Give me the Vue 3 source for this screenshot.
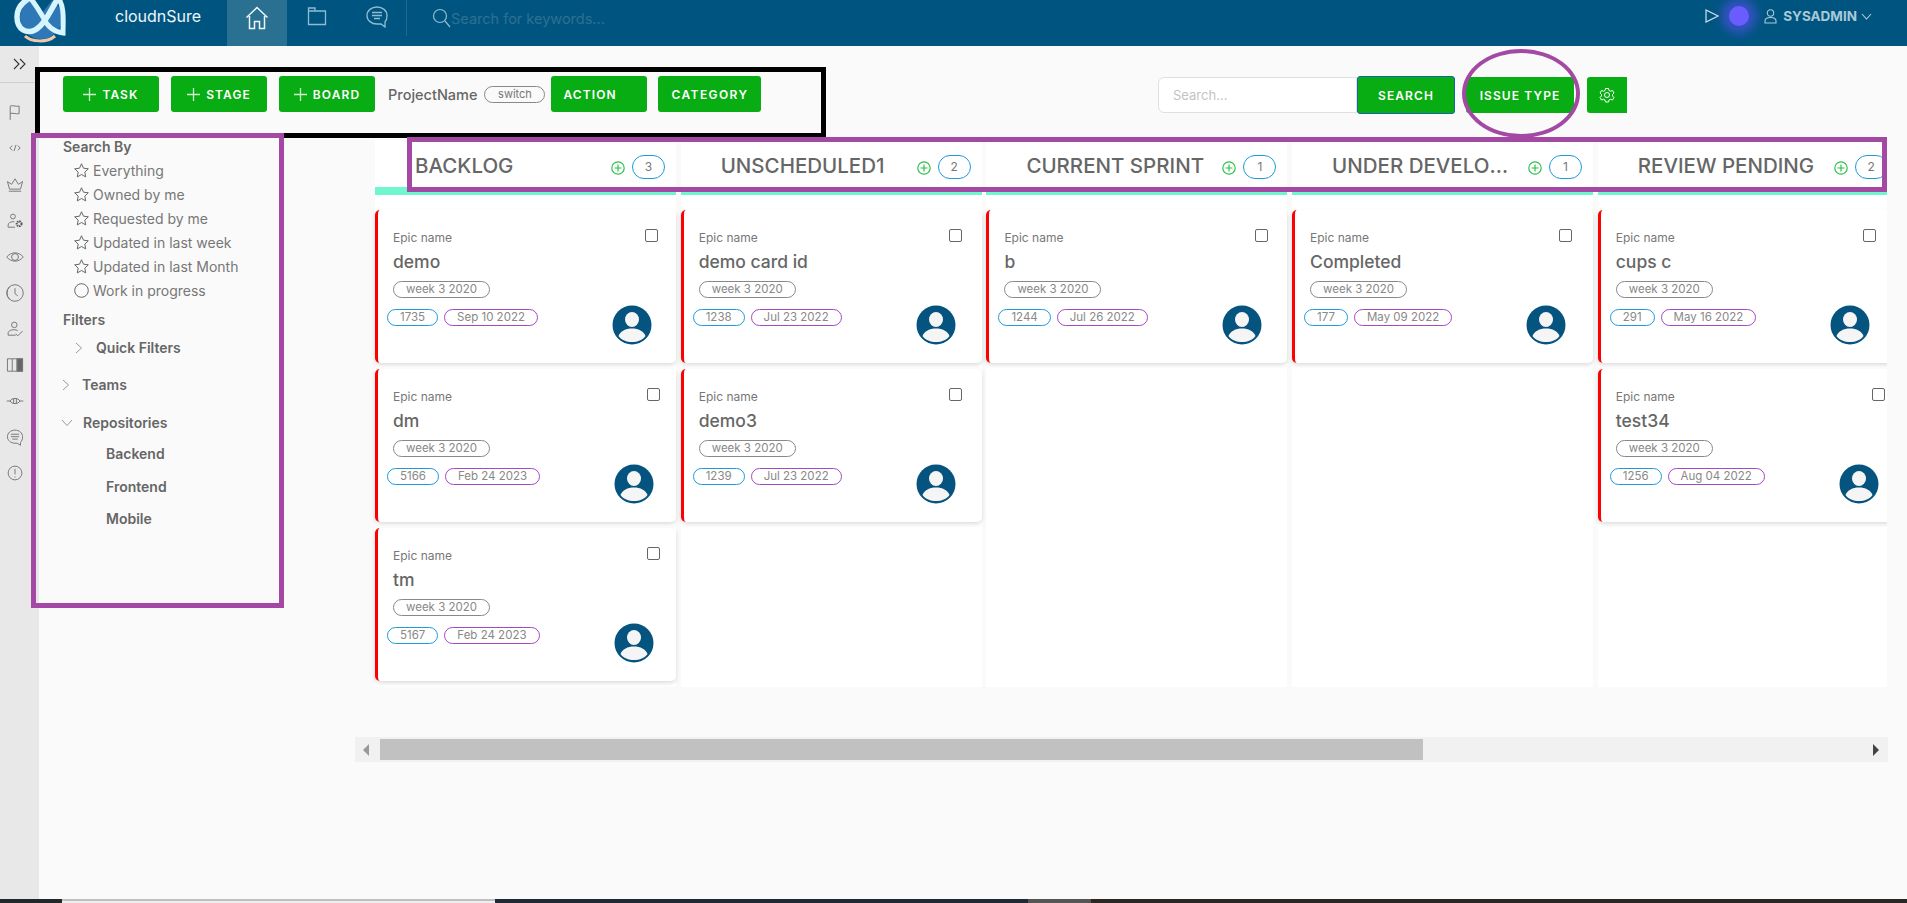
<script setup>
const sideIcons = [
  { d: 'M9 26V6c3-2 7 1 13 0v11c-5 1-10-2-13 0' },
  { d: 'M12 11l-3.500 3.500 3.500 3.500M20 11l3.500 3.500-3.500 3.500M17.500 10l-3 9', small: true },
  { d: 'M7 25h18M8 22h16l3-11-6 4-5-8-5 8-6-4z' },
  { d: 'M13 13a3.500 3.500 0 1 0 0-7 3.500 3.500 0 0 0 0 7zM6 25v-3c0-3 3-5 7-5h2M6 25h10', gear: true },
  { d: 'M4 16c6-8 18-8 24 0-6 8-18 8-24 0zM16 21a5 5 0 1 0 0-10 5 5 0 0 0 0 10z' },
  { d: 'M16 4a12 12 0 1 0 0 24 12 12 0 0 0 0-24zM8 7a13 13 0 0 0 0 18M16 9v8l4 3' },
  { d: 'M15 14a4 4 0 1 0 0-8 4 4 0 0 0 0 8zM6 25v-3c0-3 4-5 9-5 2 0 3 .5 5 1.500M6 25h11M17 23l3 3 7-7' },
  { d: 'M5 7h22v18H5zM12 7v18M19 7v18', fill: true },
  { d: 'M4 16h5M23 16h5M9 16c2-5 12-5 14 0-2 5-12 5-14 0zM14 12v8M18 12v8', small: true },
  { d: 'M16 6c-6 0-11 4-11 9.500S10 25 16 25h3l5 3v-4c2-2 3-5 3-8.500C27 10 22 6 16 6zM10 12h12M10 15.500h12M12 19h8' },
  { d: 'M16 6a10 10 0 1 0 0 20 10 10 0 0 0 0-20zM16 10v8M16 21v1.500' }
]

const searchBy = [
  { label: 'Everything' },
  { label: 'Owned by me' },
  { label: 'Requested by me' },
  { label: 'Updated in last week' },
  { label: 'Updated in last Month' },
  { label: 'Work in progress', circle: true }
]

const columns = [
  { title: 'BACKLOG', count: 3, cards: [
    { name: 'demo', id: '1735', date: 'Sep 10 2022' },
    { name: 'dm', id: '5166', date: 'Feb 24 2023' },
    { name: 'tm', id: '5167', date: 'Feb 24 2023' }
  ] },
  { title: 'UNSCHEDULED1', count: 2, cards: [
    { name: 'demo card id', id: '1238', date: 'Jul 23 2022' },
    { name: 'demo3', id: '1239', date: 'Jul 23 2022' }
  ] },
  { title: 'CURRENT SPRINT', count: 1, cards: [
    { name: 'b', id: '1244', date: 'Jul 26 2022' }
  ] },
  { title: 'UNDER DEVELOPMENT', count: 1, cards: [
    { name: 'Completed', id: '177', date: 'May 09 2022' }
  ] },
  { title: 'REVIEW PENDING', count: 2, cards: [
    { name: 'cups c', id: '291', date: 'May 16 2022' },
    { name: 'test34', id: '1256', date: 'Aug 04 2022' }
  ] }
]
</script>

<template>
  <div class="page">
    <header class="topbar">
      <div class="logo">
        <svg width="54" height="46" viewBox="0 0 54 46">
          <path d="M12 36c6 6 22 7 30 0" fill="none" stroke="#f2c9a6" stroke-width="3"/>
          <ellipse cx="28" cy="18" rx="21" ry="21" fill="#2f78b8"/>
          <path d="M17 -2L29 13 41 -2z" fill="#005580"/>
          <path d="M34 -6C20 -6 4 2 4 17c0 13 10 17 18 13 8-4 14-16 24-34" fill="none" stroke="#d6f5fc" stroke-width="5.500"/>
          <path d="M16 -4c6 8 10 14 14 21 4 9 10 15 20 16 0-13 2-27-6-37" fill="none" stroke="#d6f5fc" stroke-width="5"/>
        </svg>
      </div>
      <span class="brand">cloudnSure</span>
      <nav class="nav">
        <a class="nav-item active">
          <svg width="24" height="24" viewBox="0 0 24 24" fill="none" stroke="#eef6fa" stroke-width="1.500"><path d="M1.500 11.500L12 1.500l10.500 10M4.500 10v12.500h5v-7h5v7h5V10"/></svg>
        </a>
        <a class="nav-item">
          <svg width="20" height="20" viewBox="0 0 20 20" fill="none" stroke="#8fbcd0" stroke-width="1.300"><path d="M1.500 2h6.500v3h10.500v13.500h-17zM1.500 5h6.500"/></svg>
        </a>
        <a class="nav-item">
          <svg width="22" height="22" viewBox="0 0 22 22" fill="none" stroke="#8fbcd0" stroke-width="1.300"><path d="M11 1C5.500 1 1 4.500 1 9.500S5.500 18 11 18h4l4 3v-5c1.500-1.500 2-4 2-6.500C21 4.500 16.500 1 11 1zM6 6.500h10M6 9.500h10M8 12.500h6"/></svg>
        </a>
      </nav>
      <div class="top-search">
        <svg width="19" height="20" viewBox="0 0 19 20" fill="none" stroke="#8fbcd0" stroke-width="1.200"><circle cx="8" cy="8" r="6.500"/><path d="M13 13l5 6"/></svg>
        <span>Search for keywords...</span>
      </div>
      <div class="top-right">
        <svg width="14" height="14" viewBox="0 0 14 14" fill="none" stroke="#cfe2ea" stroke-width="1.200"><path d="M1 1l12 6L1 13z"/></svg>
        <span class="glow"></span>
        <svg width="13" height="15" viewBox="0 0 13 15" fill="none" stroke="#a9c9d8" stroke-width="1.100"><circle cx="6.500" cy="4" r="3.200"/><path d="M1 14v-2c0-2.500 2.500-3.500 5.500-3.500s5.500 1 5.500 3.500v2z"/></svg>
        <span class="user">SYSADMIN</span>
        <svg width="11" height="7" viewBox="0 0 11 7" fill="none" stroke="#b5d0dd" stroke-width="1.100"><path d="M1 1l4.500 5L10 1"/></svg>
      </div>
    </header>

    <div class="body">
      <aside class="rail">
        <div class="rail-top">
          <svg width="13" height="12" viewBox="0 0 13 12" fill="none" stroke="#333" stroke-width="1.100"><path d="M1 1l5 5-5 5M7 1l5 5-5 5"/></svg>
        </div>
        <div class="rail-icons">
          <svg v-for="(icon, i) in sideIcons" :key="i" width="22" height="22" viewBox="0 0 32 32" fill="none" stroke="#777" stroke-width="1.400">
            <path :d="icon.d"/>
            <rect v-if="icon.fill" x="19" y="7" width="8" height="18" fill="#666"/>
            <circle v-if="icon.gear" cx="22" cy="20" r="3.500" stroke="#555" stroke-width="3" stroke-dasharray="2 1"/>
          </svg>
        </div>
      </aside>

      <main class="main">
        <div class="toolbar">
          <div class="tools">
            <button class="btn"><svg class="plus" width="13" height="13" viewBox="0 0 13 13" stroke="#cdf3cf" stroke-width="1.300"><path d="M6.500 0v13M0 6.500h13"/></svg>TASK</button>
            <button class="btn"><svg class="plus" width="13" height="13" viewBox="0 0 13 13" stroke="#cdf3cf" stroke-width="1.300"><path d="M6.500 0v13M0 6.500h13"/></svg>STAGE</button>
            <button class="btn"><svg class="plus" width="13" height="13" viewBox="0 0 13 13" stroke="#cdf3cf" stroke-width="1.300"><path d="M6.500 0v13M0 6.500h13"/></svg>BOARD</button>
            <span class="project">ProjectName</span>
            <span class="switch">switch</span>
            <button class="btn left">ACTION</button>
            <button class="btn wide">CATEGORY</button>
          </div>
          <div class="tools-right">
            <div class="search-input">Search...</div>
            <button class="btn search">SEARCH</button>
            <button class="btn issue">ISSUE TYPE</button>
            <button class="btn gear">
              <svg width="16" height="16" viewBox="0 0 32 32" fill="none" stroke="#fff" stroke-width="2"><circle cx="16" cy="16" r="5"/><path d="M13 3h6l1 4 3 1.500 4-1.500 3 5-3 3v3l3 3-3 5-4-1.500-3 1.500-1 4h-6l-1-4-3-1.500-4 1.500-3-5 3-3v-3l-3-3 3-5 4 1.500 3-1.500z"/></svg>
            </button>
          </div>
        </div>

        <div class="content">
          <section class="panel">
            <h4 class="panel-head">Search By</h4>
            <ul class="search-list">
              <li v-for="item in searchBy" :key="item.label">
                <svg width="15" height="15" viewBox="0 0 15 15" fill="none" stroke="#666" stroke-width="1">
                  <circle v-if="item.circle" cx="7.500" cy="7.500" r="6.800"/>
                  <path v-else d="M7.500 .8l2 4.400 4.800.6-3.500 3.300.9 4.800-4.200-2.400-4.200 2.400.9-4.800L.7 5.800l4.800-.6z"/>
                </svg>
                {{ item.label }}
              </li>
            </ul>
            <h4 class="filters">Filters</h4>
            <div class="tree tree-quick">
              <svg width="8" height="12" viewBox="0 0 8 12" fill="none" stroke="#999" stroke-width="1"><path d="M1 1l5.500 5L1 11"/></svg>
              <span>Quick Filters</span>
            </div>
            <div class="tree tree-teams">
              <svg width="8" height="12" viewBox="0 0 8 12" fill="none" stroke="#999" stroke-width="1"><path d="M1 1l5.500 5L1 11"/></svg>
              <span>Teams</span>
            </div>
            <div class="tree tree-repos">
              <svg width="12" height="8" viewBox="0 0 12 8" fill="none" stroke="#999" stroke-width="1"><path d="M1 1l5 5.500L11 1"/></svg>
              <span>Repositories</span>
            </div>
            <ul class="repos">
              <li>Backend</li>
              <li>Frontend</li>
              <li>Mobile</li>
            </ul>
          </section>

          <section class="board-wrap">
            <div class="board">
              <div v-for="col in columns" :key="col.title" class="col">
                <div class="col-head">
                  <span class="col-title">{{ col.title }}</span>
                  <svg class="col-add" width="14" height="14" viewBox="0 0 14 14" fill="none" stroke="#2ec04f" stroke-width="1.200"><circle cx="7" cy="7" r="6.200"/><path d="M7 3.500v7M3.500 7h7"/></svg>
                  <span class="col-count">{{ col.count }}</span>
                </div>
                <div class="col-cards">
                  <article v-for="card in col.cards" :key="card.name" class="card">
                    <div class="card-inner">
                      <div class="card-top">
                        <div class="card-text">
                          <div class="epic">Epic name</div>
                          <div class="card-name">{{ card.name }}</div>
                          <span class="pill week">week 3 2020</span>
                        </div>
                        <span class="check"></span>
                      </div>
                      <div class="card-bottom">
                        <span class="pill pill-id">{{ card.id }}</span>
                        <span class="pill pill-date">{{ card.date }}</span>
                        <span class="avatar">
                          <svg width="40" height="40" viewBox="0 0 40 40">
                            <circle cx="20" cy="20" r="19.500" fill="#04547f"/>
                            <ellipse cx="20" cy="14.500" rx="7" ry="7.500" fill="#f5f5f5"/>
                            <path d="M6.500 31c2-5 7-7.500 13.500-7.500S31.500 26 33.500 31c-3 4-8 6-13.500 6s-10.500-2-13.500-6z" fill="#f5f5f5"/>
                          </svg>
                        </span>
                      </div>
                    </div>
                  </article>
                </div>
              </div>
            </div>
            <div class="scroll">
              <span class="arrow arrow-left"></span>
              <div class="thumb"></div>
              <span class="arrow arrow-right"></span>
            </div>
          </section>
        </div>
      </main>
    </div>

    <div class="strip">
      <span class="strip-a"></span>
      <span class="strip-b"></span>
      <span class="strip-c"></span>
      <span class="strip-d"></span>
      <span class="strip-e"></span>
    </div>

    <!-- hand drawn marks on top of the screenshot -->
    <div class="mark mark-tools"></div>
    <div class="mark mark-panel"></div>
    <div class="mark mark-head"></div>
    <div class="mark mark-issue"></div>
  </div>
</template>

<style>
html, body { margin: 0; background: #fafafa; overflow: hidden; }
</style>

<style scoped>
.page {
  position: relative;
  width: 1907px;
  height: 903px;
  display: flex;
  flex-direction: column;
  overflow: hidden;
  background: #fafafa;
  color: #666;
  font-family: Inter, "Open Sans", sans-serif;
}

.topbar {
  flex: 0 0 46px;
  display: flex;
  align-items: flex-start;
  background: #005580;
  color: #fff;
}
.logo { width: 115px; height: 46px; padding-left: 13px; box-sizing: border-box; overflow: hidden; }
.brand { width: 112px; font-size: 16px; line-height: 32px; color: #eef6fa; }
.nav { display: flex; height: 46px; }
.nav-item { width: 60px; height: 46px; display: flex; justify-content: center; padding-top: 6px; box-sizing: border-box; }
.nav-item.active { background: #2a7091; }
.top-search {
  height: 36px;
  border-left: 1px solid #1e6a8f;
  margin-left: -1px;
  padding-left: 25px;
  display: flex;
  align-items: center;
  font-size: 14.500px;
  color: #2f6f92;
}
.top-right { margin-left: auto; padding-right: 35px; height: 32px; display: flex; align-items: center; }
.glow {
  width: 20px;
  height: 20px;
  margin: 0 15px 0 10px;
  border-radius: 50%;
  background: #6b5cff;
  box-shadow: 0 0 8px 8px rgba(90, 80, 240, .55);
}
.user { margin: 0 4px 0 6px; font-size: 13.500px; font-weight: 700; color: #a9c9d8; }

.body { flex: 1; display: flex; min-height: 0; }
.rail { width: 39px; background: #e8e8e8; flex: none; }
.rail-top { height: 36px; border-bottom: 1px solid #d0d0d0; display: flex; align-items: center; justify-content: center; }
.rail-icons { padding: 19px 0 0 4px; display: flex; flex-direction: column; gap: 14px; }

.main { flex: 1; min-width: 0; }
.toolbar {
  height: 94px;
  box-sizing: border-box;
  padding: 30px 280px 0 24px;
  display: flex;
  justify-content: space-between;
  align-items: flex-start;
}
.tools { display: flex; align-items: center; gap: 12px; }
.tools-right { display: flex; align-items: center; }
.btn {
  width: 96px;
  height: 36px;
  padding: 0;
  border: 0;
  border-radius: 3px;
  background: #07ad12;
  color: #fff;
  font-family: inherit;
  font-size: 12px;
  font-weight: 600;
  letter-spacing: 1.100px;
  display: flex;
  align-items: center;
  justify-content: center;
}
.plus { margin-right: 6px; flex: none; }
.btn.left { justify-content: flex-start; padding-left: 12px; box-sizing: border-box; }
.btn.wide { width: 103px; letter-spacing: 1.400px; margin-left: -1px; }
.project { margin-left: 1px; font-size: 14.500px; font-weight: 500; color: #666; }
.switch {
  margin: 0 -6px 0 -5px;
  width: 59px;
  height: 15px;
  border: 1px solid #888;
  border-radius: 9px;
  font-size: 11px;
  line-height: 15px;
  text-align: center;
  color: #777;
}
.search-input {
  width: 199px;
  height: 36px;
  box-sizing: border-box;
  border: 1px solid #e0e0e0;
  border-radius: 6px 0 0 6px;
  background: #fff;
  padding-left: 14px;
  font-size: 13px;
  line-height: 34px;
  color: #c4c4c4;
}
.btn.search { width: 98px; height: 38px; box-sizing: border-box; border: 1px solid #1565a8; }
.btn.issue { width: 108px; margin-left: 11px; }
.btn.gear { width: 40px; margin-left: 13px; border-radius: 3px 0 0 3px; }

.content { display: flex; }
.panel { width: 316px; flex: none; font-size: 14px; }
.panel-head, .filters { margin: 0; padding-left: 24px; font-size: 14px; font-weight: 600; line-height: 14px; color: #666; }
.search-list { list-style: none; margin: 0; padding: 4px 0 0 35px; color: #777; }
.search-list li { height: 24px; display: flex; align-items: center; gap: 4px; }
.filters { margin-top: 11px; }
.tree { display: flex; align-items: center; font-weight: 600; font-size: 14px; color: #666; line-height: 18px; }
.tree-quick { margin: 12px 0 0 36px; gap: 13px; }
.tree-teams { margin: 19px 0 0 23px; gap: 12px; }
.tree-repos { margin: 20px 0 0 22px; gap: 10px; }
.repos { list-style: none; margin: 0; padding: 13px 0 0 67px; font-weight: 600; color: #666; }
.repos li { height: 32.500px; line-height: 18px; }

.board-wrap { width: 1533px; flex: none; }
.board { display: flex; gap: 4.700px; padding-left: 20px; overflow: hidden; box-sizing: border-box; width: 1532px; }
.col { flex: 0 0 301px; height: 547px; background: #fff; }
.col-head {
  height: 55px;
  box-sizing: border-box;
  border-bottom: 8px solid #6ff7d0;
  display: flex;
  align-items: flex-start;
  padding-left: 40px;
}
.col-title {
  width: 178px;
  margin-top: 14px;
  font-size: 20.500px;
  font-weight: 500;
  line-height: 24px;
  color: #666;
  white-space: nowrap;
  overflow: hidden;
  text-overflow: ellipsis;
}
.col-add { margin: 21px 0 0 18px; flex: none; }
.col-count {
  flex: none;
  margin: 15px 0 0 7px;
  width: 31px;
  height: 22px;
  border: 1px solid #1e9bd8;
  border-radius: 12px;
  font-size: 12px;
  line-height: 22px;
  text-align: center;
  color: #777;
}
.col-cards { padding-top: 15px; display: flex; flex-direction: column; gap: 6px; }
.card {
  height: 153px;
  box-sizing: border-box;
  border-left: 3px solid #f00;
  border-radius: 5px;
  background: #fff;
  box-shadow: 0 2px 4px rgba(0, 0, 0, .14);
  padding: 16px 0 0 9px;
}
.card-inner { display: inline-flex; flex-direction: column; }
.card-top { display: flex; justify-content: space-between; align-items: flex-start; }
.card-text { padding-left: 6px; }
.epic { font-size: 12px; line-height: 18px; color: #777; }
.card-name { margin-top: 3px; font-size: 17.500px; font-weight: 500; line-height: 24px; color: #666; }
.check {
  width: 11px;
  height: 11px;
  border: 1px solid #666;
  border-radius: 2px;
  background: #fff;
}
.pill {
  display: inline-block;
  height: 15px;
  border: 1px solid #888;
  border-radius: 9px;
  padding: 0 12px;
  font-size: 11.500px;
  line-height: 15px;
  color: #888;
  white-space: nowrap;
}
.week { margin-top: 7px; vertical-align: top; }
.card-bottom { margin-top: 11px; display: flex; align-items: flex-start; }
.pill-id { border-color: #1e9bd8; }
.pill-date { margin-left: 6px; border-color: #a349c4; }
.avatar { margin: -4px 6px 0 74px; width: 40px; height: 40px; }

.scroll {
  margin-top: 50px;
  width: 1533px;
  height: 25px;
  background: #f1f1f1;
  display: flex;
  align-items: center;
  box-sizing: border-box;
  padding: 0 9px 0 8px;
}
.thumb { margin-left: 11px; width: 1043px; height: 21px; background: #c1c1c1; }
.arrow { width: 0; height: 0; border-top: 6px solid transparent; border-bottom: 6px solid transparent; }
.arrow-left { border-right: 6px solid #999; }
.arrow-right { margin-left: auto; border-left: 6px solid #444; }

.strip { flex: 0 0 4px; display: flex; }
.strip-a { width: 62px; background: #20282c; }
.strip-b { width: 433px; box-sizing: border-box; border-top: 2px solid #c0c0c0; background: #eee; }
.strip-c { width: 533px; background: #1c2a38; }
.strip-d { width: 63px; background: #555; }
.strip-e { flex: 1; background: #2a2624; }

.mark { position: absolute; box-sizing: border-box; pointer-events: none; }
.mark-tools { left: 35px; top: 67px; width: 791px; height: 71px; border: 5px solid #000; }
.mark-panel { left: 31px; top: 133px; width: 253px; height: 475px; border: 5px solid #a349a4; }
.mark-head { left: 407px; top: 137px; width: 1480px; height: 55px; border: 5px solid #a349a4; }
.mark-issue { left: 1462px; top: 49px; width: 118px; height: 89px; border: 4px solid #a349a4; border-radius: 50%; }
</style>
